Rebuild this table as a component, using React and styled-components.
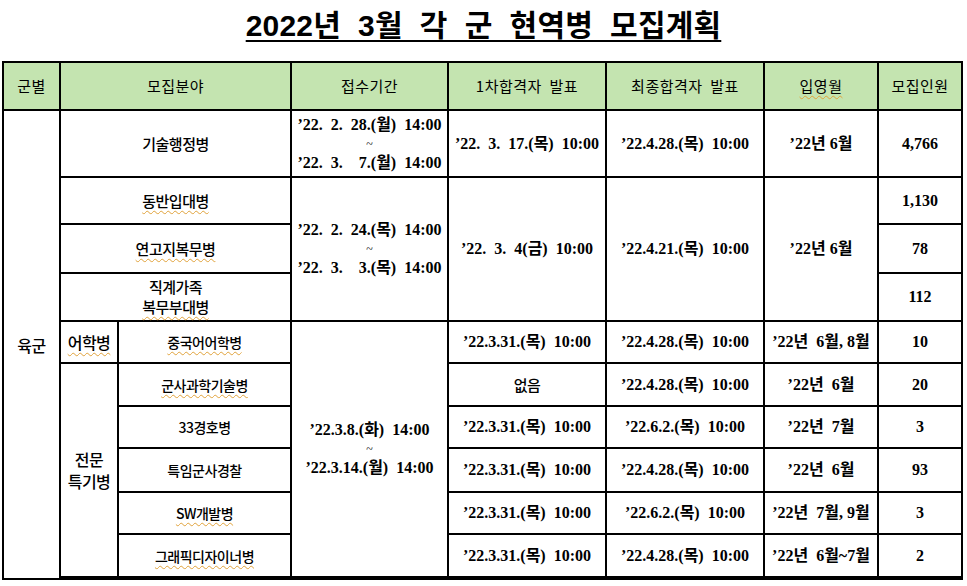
import React from 'react';
import styled, { createGlobalStyle } from 'styled-components';

const GlobalStyle = createGlobalStyle`
  html, body {
    margin: 0;
    padding: 0;
    background: #ffffff;
  }
`;

const Page = styled.div`
  width: 967px;
  height: 586px;
  background: #ffffff;
  display: flex;
  flex-direction: column;
  align-items: flex-start;
  box-sizing: border-box;
  padding: 10px 0 0 2px;
  color: #000000;
`;

const Title = styled.h1`
  align-self: center;
  margin: 0 0 19px 0;
  padding-right: 2px;
  font-family: 'Liberation Sans', 'Noto Sans CJK KR', sans-serif;
  font-weight: 700;
  font-size: 30px;
  line-height: 32px;
  letter-spacing: 0.2px;
  white-space: pre;
  text-decoration: underline;
  text-decoration-thickness: 2px;
  text-underline-offset: 4px;
`;

const Table = styled.div`
  display: grid;
  grid-template-columns: 55px 56px 171px 155px 156px 156px 112px 82px;
  grid-template-rows: 46px 65px 45px 47px 46px 40px 41px 40px 42px 40px 41px;
  gap: 2px;
  padding: 2px;
  background: #000000;
`;

const Cell = styled.div`
  grid-column: ${(p) => p.col || 'auto'};
  grid-row: ${(p) => p.row || 'auto'};
  background: ${(p) => (p.head ? '#c4e4b0' : '#ffffff')};
  display: flex;
  flex-direction: column;
  align-items: center;
  justify-content: center;
  text-align: center;
  font-family: ${(p) =>
    p.head
      ? "'Noto Sans CJK KR', sans-serif"
      : "'Liberation Serif', 'Noto Sans CJK KR', serif"};
  font-weight: ${(p) => (p.head ? 400 : 700)};
  font-size: ${(p) => (p.head ? '15px' : '16px')};
  line-height: 20px;
  white-space: pre;
  letter-spacing: ${(p) => (p.head ? '0.5px' : '0')};
`;

const Label = styled.span`
  display: block;
  font-family: 'Noto Sans CJK KR', sans-serif;
  font-weight: 500;
  font-size: ${(p) => p.size || '15px'};
  line-height: ${(p) => (p.size === '16px' ? '22px' : '20px')};
  letter-spacing: -0.5px;
  ${(p) =>
    p.squiggle &&
    `
    text-decoration: underline wavy #e0a23a;
    text-decoration-thickness: 1px;
    text-underline-offset: 3px;
  `}
`;

const Tilde = styled.span`
  font-size: 12px;
  line-height: 18px;
  font-weight: 400;
`;

const Squiggle = styled.span`
  text-decoration: underline wavy #e0a23a;
  text-decoration-thickness: 1px;
  text-underline-offset: 3px;
`;

const headers = [
  { text: '군별', col: '1' },
  { text: '모집분야', col: '2 / 4' },
  { text: '접수기간', col: '4' },
  { text: '1차합격자  발표', col: '5' },
  { text: '최종합격자  발표', col: '6' },
  { text: '입영월', col: '7', squiggle: true },
  { text: '모집인원', col: '8' },
];

const specialRows = [
  { name: '군사과학기술병', first: '없음', final: "’22.4.28.(목)  10:00", month: "’22년  6월", count: '20' },
  { name: '33경호병', first: "’22.3.31.(목)  10:00", final: "’22.6.2.(목)  10:00", month: "’22년  7월", count: '3' },
  { name: '특임군사경찰', first: "’22.3.31.(목)  10:00", final: "’22.4.28.(목)  10:00", month: "’22년  6월", count: '93' },
  { name: 'SW개발병', first: "’22.3.31.(목)  10:00", final: "’22.6.2.(목)  10:00", month: "’22년  7월, 9월", count: '3' },
  { name: '그래픽디자이너병', first: "’22.3.31.(목)  10:00", final: "’22.4.28.(목)  10:00", month: "’22년  6월~7월", count: '2' },
];

const Period = ({ from, to }) => (
  <>
    <span>{from}</span>
    <Tilde>~</Tilde>
    <span>{to}</span>
  </>
);

export default function App() {
  return (
    <>
      <GlobalStyle />
      <Page>
        <Title>{'2022년  3월  각  군  현역병  모집계획'}</Title>
        <Table>
          {headers.map((h) => (
            <Cell head key={h.text} col={h.col} row="1">
              {h.squiggle ? <Squiggle>{h.text}</Squiggle> : h.text}
            </Cell>
          ))}

          <Cell col="1" row="2 / 13">
            <Label size="16px">육군</Label>
          </Cell>

          <Cell col="2 / 4" row="2">
            <Label>기술행정병</Label>
          </Cell>
          <Cell col="4" row="2">
            <Period from={"’22.  2.  28.(월)  14:00"} to={"’22.  3.    7.(월)  14:00"} />
          </Cell>
          <Cell col="5" row="2">{"’22.  3.  17.(목)  10:00"}</Cell>
          <Cell col="6" row="2">{"’22.4.28.(목)  10:00"}</Cell>
          <Cell col="7" row="2">{"’22년 6월"}</Cell>
          <Cell col="8" row="2">4,766</Cell>

          <Cell col="2 / 4" row="3">
            <Label squiggle>동반입대병</Label>
          </Cell>
          <Cell col="2 / 4" row="4">
            <Label squiggle>연고지복무병</Label>
          </Cell>
          <Cell col="2 / 4" row="5">
            <Label>직계가족</Label>
            <Label squiggle>복무부대병</Label>
          </Cell>
          <Cell col="4" row="3 / 6">
            <Period from={"’22.  2.  24.(목)  14:00"} to={"’22.  3.    3.(목)  14:00"} />
          </Cell>
          <Cell col="5" row="3 / 6">{"’22.  3.  4(금)  10:00"}</Cell>
          <Cell col="6" row="3 / 6">{"’22.4.21.(목)  10:00"}</Cell>
          <Cell col="7" row="3 / 6">{"’22년 6월"}</Cell>
          <Cell col="8" row="3">1,130</Cell>
          <Cell col="8" row="4">78</Cell>
          <Cell col="8" row="5">112</Cell>

          <Cell col="2" row="6">
            <Label squiggle size="16px">어학병</Label>
          </Cell>
          <Cell col="3" row="6">
            <Label squiggle size="14px">중국어어학병</Label>
          </Cell>
          <Cell col="4" row="6 / 12">
            <Period from={"’22.3.8.(화)  14:00"} to={"’22.3.14.(월)  14:00"} />
          </Cell>
          <Cell col="5" row="6">{"’22.3.31.(목)  10:00"}</Cell>
          <Cell col="6" row="6">{"’22.4.28.(목)  10:00"}</Cell>
          <Cell col="7" row="6">{"’22년  6월, 8월"}</Cell>
          <Cell col="8" row="6">10</Cell>

          <Cell col="2" row="7 / 12">
            <Label size="16px">전문</Label>
            <Label size="16px">특기병</Label>
          </Cell>
          {specialRows.map((r, i) => {
            const row = String(7 + i);
            return (
              <React.Fragment key={r.name}>
                <Cell col="3" row={row}>
                  <Label squiggle={i !== 1 && i !== 2} size="14px">
                    {r.name}
                  </Label>
                </Cell>
                <Cell col="5" row={row}>
                  {r.first === '없음' ? <Label>{r.first}</Label> : r.first}
                </Cell>
                <Cell col="6" row={row}>{r.final}</Cell>
                <Cell col="7" row={row}>{r.month}</Cell>
                <Cell col="8" row={row}>{r.count}</Cell>
              </React.Fragment>
            );
          })}
        </Table>
      </Page>
    </>
  );
}
